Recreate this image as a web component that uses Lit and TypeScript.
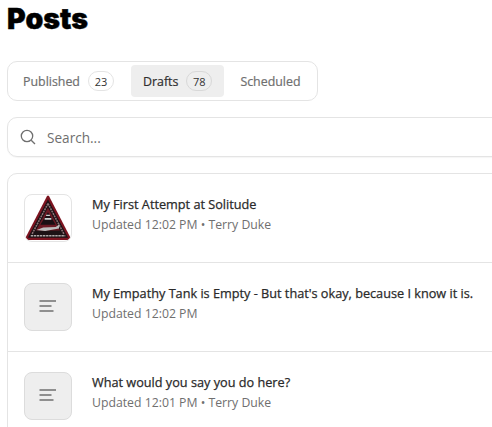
import { LitElement, html, css } from "lit";
import { customElement } from "lit/decorators.js";

const lines = html`<svg class="lines" width="18" height="14" viewBox="0 0 18 14"><path d="M0.500 1h16.500M0.500 6h12M0.500 11h14" stroke="#8f8f8f" stroke-width="2" fill="none"/></svg>`;

const patch = html`<svg width="48" height="48" viewBox="0 0 48 48">
  <path d="M23 1 Q24 0 25 1 L47.500 44.500 Q48 47 45.500 47 L2 47 Q0 47 .5 44.500 Z" fill="#7c1420"/>
  <path d="M24 4.500 L45 44.500 L3 44.500 Z" fill="#1d1215"/>
  <path d="M24 9 L7.500 40.500M24 9 L40.500 40.500" stroke="#8d7477" stroke-width="1.600" stroke-dasharray="2 .8"/>
  <path d="M24 13 L36.500 37 L11.500 37 Z" fill="#6b1a24"/>
  <path d="M24 18 L32 31 L16 31 Z" fill="#1a1014"/>
  <path d="M22 20.500h4v1.500h-4zM20.500 24h7v1.800h-7z" fill="#d0d0d0"/>
  <path d="M12 36.500 L19 34 L32 33.500 L36 30.500 L35.500 35 L21 37.500 Z" fill="#bdbdbd"/>
  <path d="M6 42.500h36" stroke="#b0a8a8" stroke-width="1.500" stroke-dasharray="2.500 .7"/>
</svg>`;

@customElement("app-root")
export class AppRoot extends LitElement {
  static styles = css`
    :host { display: block; width: 492px; height: 427px; overflow: hidden; background: #fff;
      font-family: "Open Sans", "Noto Sans", sans-serif; box-sizing: border-box; padding-left: 7px; }
    * { box-sizing: border-box; }
    .page { width: 640px; }
    h1 { margin: 0; height: 61px; font: 900 28.500px/37px Inter, sans-serif; color: #000; -webkit-text-stroke: .4px #000; }
    .tabs { display: flex; width: 311px; height: 40px; border: 1px solid #e4e4e4; border-radius: 10px; padding: 3px; gap: 4px; }
    .tab { display: flex; align-items: center; gap: 8px; height: 32px; padding: 0 12px; font-size: 12.400px; font-weight: 500; -webkit-text-stroke: .2px currentColor; color: #6f6f6f; border-radius: 4px; white-space: nowrap; }
    .tab.first { padding-right: 13px; }
    .tab.on { background: #eeeeee; color: #2f2f2f; }
    .badge { display: flex; align-items: center; justify-content: center; width: 26px; height: 20px; border: 1px solid #e4e4e4; border-radius: 10px; font-size: 11px; font-weight: 400; -webkit-text-stroke: 0; color: #333; }
    .tab.on .badge { border-color: #d8d8d8; }
    .search { margin-top: 16px; display: flex; align-items: center; gap: 11px; height: 40px; border: 1px solid #e4e4e4; border-radius: 10px; padding: 0 12px; box-shadow: 0 1px 1px rgba(0,0,0,.04); color: #6f6f6f; font-size: 13.600px; }
    .list { margin-top: 16px; border: 1px solid #e4e4e4; border-radius: 10px 10px 0 0; }
    .row { display: flex; align-items: center; gap: 20px; height: 89px; padding: 0 16px; border-bottom: 1px solid #e4e4e4; }
    .thumb { flex: none; width: 48px; height: 48px; border: 1px solid #e4e4e4; border-radius: 8px; display: flex; align-items: center; justify-content: center; overflow: hidden; }
    .thumb.empty { background: #eeeeee; border-color: #dcdcdc; }
    .text { padding-bottom: 6px; }
    .title { font-size: 12.700px; font-weight: 500; -webkit-text-stroke: .25px currentColor; line-height: 18px; margin-bottom: 2px; color: #2a2a2a; }
    .meta { font-size: 12.250px; line-height: 20px; color: #6f6f6f; }
  `;
  render() {
    return html`<div class="page">
      <h1>Posts</h1>
      <div class="tabs">
        <div class="tab first">Published <span class="badge">23</span></div>
        <div class="tab on">Drafts <span class="badge">78</span></div>
        <div class="tab">Scheduled</div>
      </div>
      <div class="search">
        <svg width="16" height="16" viewBox="0 0 16 16" fill="none" stroke="#6f6f6f" stroke-width="1.300"><circle cx="7" cy="7" r="5.700"/><path d="M11.200 11.200 15 15"/></svg>
        <span>Search...</span>
      </div>
      <div class="list">
        <div class="row"><div class="thumb">${patch}</div><div class="text"><div class="title">My First Attempt at Solitude</div><div class="meta">Updated 12:02 PM • Terry Duke</div></div></div>
        <div class="row"><div class="thumb empty">${lines}</div><div class="text"><div class="title">My Empathy Tank is Empty - But that's okay, because I know it is.</div><div class="meta">Updated 12:02 PM</div></div></div>
        <div class="row"><div class="thumb empty">${lines}</div><div class="text"><div class="title">What would you say you do here?</div><div class="meta">Updated 12:01 PM • Terry Duke</div></div></div>
      </div>
    </div>`;
  }
}
